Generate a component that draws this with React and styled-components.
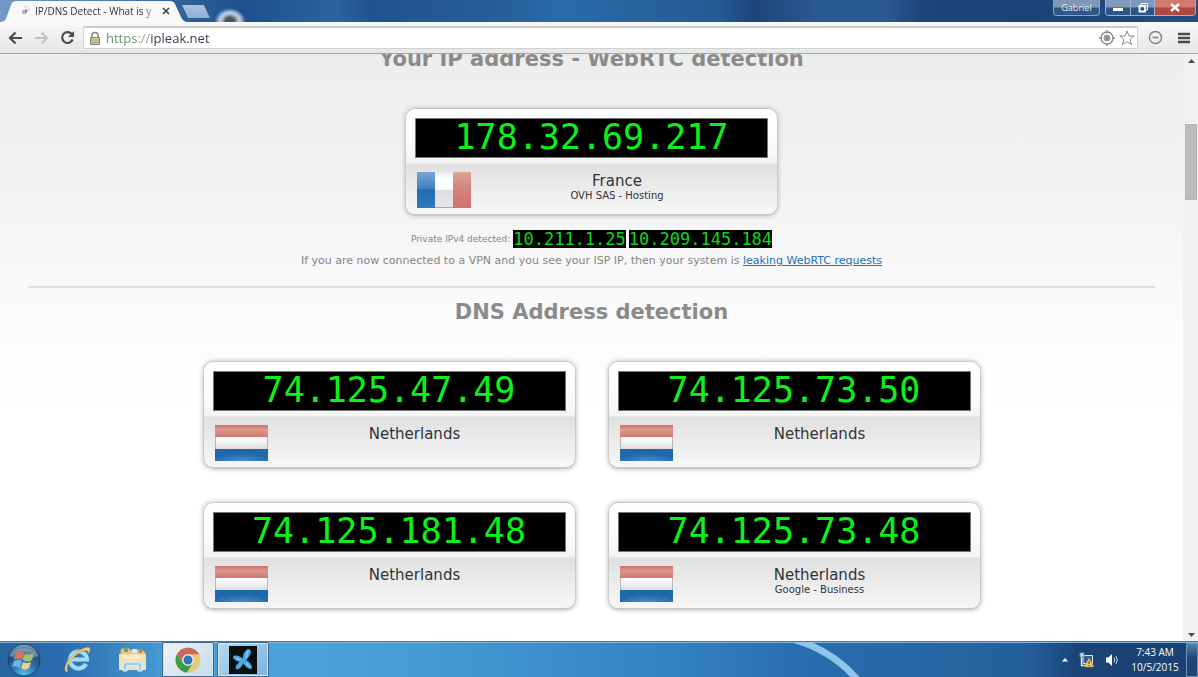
import React from 'react';
import styled, { createGlobalStyle } from 'styled-components';

const Global = createGlobalStyle`
  *, *::before, *::after { box-sizing: border-box; }
  html, body { margin: 0; padding: 0; overflow: hidden; }
  body { font-family: "DejaVu Sans", Verdana, sans-serif; background: #fff; }
  button { font: inherit; border: 0; padding: 0; margin: 0; background: none; color: inherit; }
  svg { display: block; }
`;

const UI_FONT = '"Open Sans", "Noto Sans", sans-serif';

const Screen = styled.div`
  display: flex;
  flex-direction: column;
  height: 100vh;
`;

/* Browser frame */
const TitleBar = styled.header`
  position: relative;
  flex: none;
  display: flex;
  align-items: flex-start;
  height: 22px;
  font-family: ${UI_FONT};
  background:
    radial-gradient(ellipse 12px 10px at 230px 21px, #56534f 0 35%, #a8b6c6 65%, #b4cde8 85%, transparent 130%),
    linear-gradient(90deg, #7399c6 0, #1d508c 240px, #2a639f 28%, #215290 31%, #275f9b 42%, #2b6bab 47%, #255a94 60%, #1c4678 63%, #28598f 68%, #28598f 74%, #1c4678 77%, #1a4477 86%, #204f84 100%);
`;

const Tab = styled.div`
  display: flex;
  align-items: center;
  gap: 5px;
  width: 188px;
  height: 22px;
  padding: 0 18px 0 20px;
  background: #f8f8f8;
  clip-path: path('M0 22 C5 22 6 19 7 16 L11 5 Q12 1 17 1 H169 Q174 1 175 4 L181 17 Q183 22 188 22 Z');
  color: #333;
`;

const TabTitle = styled.span`
  flex: 1;
  font-size: 10px;
  line-height: 20px;
  white-space: nowrap;
  overflow: hidden;
  mask-image: linear-gradient(90deg, #000 108px, transparent 124px);
`;

const NewTab = styled.button`
  width: 28px;
  height: 13px;
  margin: 5px 0 0 -6px;
  background: linear-gradient(#a9c3de, #8fb0d3);
  clip-path: polygon(0 0, 78% 0, 100% 100%, 22% 100%);
`;

const WindowControls = styled.div`
  display: flex;
  gap: 5px;
  margin-left: auto;
  padding-right: 2px;
`;

const ProfileButton = styled.button`
  width: 47px;
  height: 16px;
  border: 1px solid #8ba4c3;
  border-top: 0;
  border-radius: 0 0 4px 4px;
  background: linear-gradient(#7f98b8 45%, #2f5788 55%);
  color: #e9eff6;
  font-size: 9px;
  line-height: 14px;
`;

const ControlGroup = styled.div`
  display: flex;
  height: 16px;
  border: 1px solid #9db2cd;
  border-top: 0;
  border-radius: 0 0 4px 4px;
  overflow: hidden;
`;

const ControlButton = styled.button`
  display: flex;
  align-items: center;
  justify-content: center;
  width: ${(p) => (p.$close ? '41px' : '24px')};
  height: 15px;
  border-left: ${(p) => (p.$first ? '0' : '1px solid #9db2cd')};
  background: ${(p) => (p.$close ? 'linear-gradient(#d07a72 45%, #b04a40 55%)' : 'linear-gradient(#7f9abb 45%, #2c5487 55%)')};
`;

const Toolbar = styled.nav`
  flex: none;
  display: flex;
  align-items: center;
  height: 32px;
  padding: 0 6px 0 7px;
  background: linear-gradient(#f8f8f8, #e6e7e7);
  border-bottom: 1px solid #a5a8a7;
`;

const ToolButton = styled.button`
  display: flex;
  align-items: center;
  justify-content: center;
  width: ${(p) => p.$w || 26}px;
  height: 22px;
`;

const Omnibox = styled.label`
  flex: 1;
  display: flex;
  align-items: center;
  height: 23px;
  margin: 0 7px;
  padding-left: 5px;
  border: 1px solid #d0d1d1;
  border-top: 2px solid #c9caca;
  border-radius: 2px;
  background: #fff;
`;

const Url = styled.input`
  flex: 1;
  min-width: 0;
  height: 20px;
  border: 0;
  padding: 0;
  margin-left: 5px;
  outline: 0;
  font: 13px/20px ${UI_FONT};
  color: transparent;
  background: linear-gradient(90deg, #5f8f62 0 31px, #9a9a9a 31px 44px, #333947 44px);
  background-clip: text;
  -webkit-background-clip: text;
`;

/* Page */
const Viewport = styled.div`
  flex: 1;
  min-height: 0;
  display: flex;
`;

const Page = styled.main`
  flex: 1;
  min-width: 0;
  overflow: hidden;
  padding: 0 28px;
  background: linear-gradient(#ededed 0, #f2f2f2 120px, #fcfcfc 280px, #fff 360px);
`;

const Scrolled = styled.div`
  display: flex;
  flex-direction: column;
  align-items: center;
  margin-top: -8px;
`;

const Heading = styled.h2`
  margin: 0 0 36px;
  font-size: 21px;
  line-height: 26px;
  font-weight: bold;
  color: #8a8a8a;
`;

const Card = styled.article`
  width: 373px;
  height: 108px;
  padding: 9px;
  border: 1px solid #cacaca;
  border-bottom-width: 2px;
  border-radius: 10px;
  background: linear-gradient(#fff 0, #fdfdfd 30px, #f3f3f3 54px, #e0e0e0 55px, #ececec 80px, #f6f6f6 100%);
  box-shadow: 0 0 5px #bbb;
`;

const Address = styled.div`
  height: 40px;
  border: 1px solid #777;
  background: #000;
  color: #0cf01c;
  font: 35px/37px "DejaVu Sans Mono", monospace;
  text-align: center;
  white-space: nowrap;
`;

const Info = styled.div`
  display: flex;
  align-items: flex-start;
  padding: 14px 1px 0 2px;
`;

const Place = styled.div`
  flex: 1;
  padding-right: 4px;
  text-align: center;
  color: #30343a;
`;

const Country = styled.div`
  font-size: 15px;
  line-height: 18px;
`;

const Provider = styled.div`
  font-size: 10px;
  line-height: 12px;
`;

const PrivateRow = styled.div`
  display: flex;
  align-items: center;
  gap: 3px;
  margin-top: 14px;
  font-size: 9px;
  line-height: 18px;
  color: #858585;
`;

const SmallAddress = styled.span`
  height: 18px;
  background: #000;
  color: #0cd81a;
  font: 17px/18px "DejaVu Sans Mono", monospace;
`;

const Note = styled.p`
  margin: 6px 0 18px;
  font-size: 11px;
  line-height: 14px;
  color: #858585;

  a { color: #2470b8; }
`;

const Rule = styled.hr`
  width: 100%;
  height: 2px;
  margin: 0 0 11px;
  border: 0;
  background: #dedede;
`;

const CardGrid = styled.section`
  display: grid;
  grid-template-columns: repeat(2, auto);
  gap: 33px 32px;
`;

const ScrollBar = styled.div`
  flex: none;
  display: flex;
  flex-direction: column;
  align-items: center;
  width: 15px;
  padding: 4px 1px 3px 2px;
  background: #f1f1f1;
`;

const ScrollTrack = styled.div`
  flex: 1;
  width: 100%;
  padding-top: 60px;
`;

const ScrollThumb = styled.div`
  height: 76px;
  border: 1px solid #b4b4b4;
  background: #bcbcbc;
`;

/* Taskbar */
const TaskBar = styled.footer`
  position: relative;
  flex: none;
  display: flex;
  align-items: center;
  height: 36px;
  padding-left: 7px;
  border-top: 1px solid #55758f;
  box-shadow: inset 0 1px #83b4dc;
  font-family: ${UI_FONT};
  color: #fff;
  background: linear-gradient(90deg, #2a63a0 0, #296cae 5%, #489cd4 14%, #4ca3da 25%, #4196d0 40%, #3280c0 57%, #286eaf 67%, #2765a3 80%, #255e9c 86%, #1a4376 90%, #1a4274 100%);
`;

const Streak = styled.svg`
  position: absolute;
  left: 65%;
  top: 0;
`;

const TaskItem = styled.button`
  display: flex;
  align-items: center;
  justify-content: center;
  width: ${(p) => p.$w || 52}px;
  height: 35px;
  margin-right: ${(p) => p.$gap || 0}px;
  border: ${(p) => (p.$open ? '1px solid #40698f' : '0')};
  border-radius: 2px;
  background: ${(p) => (p.$active ? 'linear-gradient(135deg, #eef4f8, #c4dbea)' : p.$open ? 'linear-gradient(135deg, #b8d8ef, #79b4df)' : 'none')};
  box-shadow: ${(p) => (p.$open ? 'inset 0 0 0 1px #d5e7f4' : 'none')};
`;

const Tray = styled.div`
  position: relative;
  display: flex;
  align-items: center;
  gap: 8px;
  height: 100%;
  margin-left: auto;
`;

const Clock = styled.time`
  width: 56px;
  font-size: 10px;
  line-height: 15px;
  padding-top: 1px;
  text-align: center;
`;

const ShowDesktop = styled.button`
  width: 12px;
  height: 34px;
  margin-left: -5px;
  border: 1px solid #6d93bb;
  background: linear-gradient(#5480ad, #1d4577 45%);
`;

const FranceFlag = () => (
  <svg width="54" height="37" role="img" aria-label="France">
    <defs>
      <linearGradient id="frBlue" x2="0" y2="1"><stop offset="0" stopColor="#79a6d4" /><stop offset=".45" stopColor="#4283c0" /><stop offset=".5" stopColor="#216bb0" /><stop offset="1" stopColor="#2e7bbf" /></linearGradient>
      <linearGradient id="frWhite" x2="0" y2="1"><stop offset="0" stopColor="#ececec" /><stop offset=".2" stopColor="#fff" /><stop offset=".5" stopColor="#fafafa" /><stop offset=".51" stopColor="#dedede" /><stop offset="1" stopColor="#e6e6e6" /></linearGradient>
      <linearGradient id="frRed" x2="0" y2="1"><stop offset="0" stopColor="#dfa590" /><stop offset=".4" stopColor="#d48680" /><stop offset="1" stopColor="#cf7371" /></linearGradient>
    </defs>
    <path d="M0 0H18V36H0Z" fill="url(#frBlue)" />
    <path d="M18 0H36V36H18Z" fill="url(#frWhite)" />
    <path d="M36 0H54V36H36Z" fill="url(#frRed)" />
    <path d="M18 35.500H36" stroke="#aaa" />
  </svg>
);

const NetherlandsFlag = () => (
  <svg width="54" height="37" role="img" aria-label="Netherlands">
    <defs>
      <linearGradient id="nlRed" x2="0" y2="1"><stop offset="0" stopColor="#cf6f6c" /><stop offset=".4" stopColor="#dc9a8d" /><stop offset="1" stopColor="#cf7573" /></linearGradient>
      <linearGradient id="nlWhite" x2="0" y2="1"><stop offset="0" stopColor="#fff" /><stop offset=".5" stopColor="#f2f2f2" /><stop offset="1" stopColor="#dcdcdc" /></linearGradient>
      <radialGradient id="nlBlue" cx=".5" cy="1" r=".6"><stop offset="0" stopColor="#4c8dc8" /><stop offset="1" stopColor="#1f68ad" /></radialGradient>
    </defs>
    <path d="M0 0H53V12H0Z" fill="url(#nlRed)" />
    <path d="M0 12H53V24H0Z" fill="url(#nlWhite)" />
    <path d="M0 24H53V36H0Z" fill="url(#nlBlue)" />
    <path d="M.5 12V24M52.500 12V24" stroke="#b9b9b9" />
  </svg>
);

const IpCard = ({ ip, country, provider }) => (
  <Card>
    <Address>{ip}</Address>
    <Info>
      {country === 'France' ? <FranceFlag /> : <NetherlandsFlag />}
      <Place>
        <Country>{country}</Country>
        {provider && <Provider>{provider}</Provider>}
      </Place>
    </Info>
  </Card>
);

const dnsServers = [
  { ip: '74.125.47.49', country: 'Netherlands' },
  { ip: '74.125.73.50', country: 'Netherlands' },
  { ip: '74.125.181.48', country: 'Netherlands' },
  { ip: '74.125.73.48', country: 'Netherlands', provider: 'Google - Business' },
];

const StartOrb = () => (
  <svg width="34" height="34" viewBox="0 0 34 34">
    <defs>
      <radialGradient id="orb" cx=".5" cy=".95" r=".95"><stop offset="0" stopColor="#57c1ee" /><stop offset=".4" stopColor="#2d76ae" /><stop offset=".7" stopColor="#234c78" /><stop offset="1" stopColor="#8fa8c0" /></radialGradient>
    </defs>
    <circle cx="17" cy="17" r="16" fill="url(#orb)" stroke="#1d426c" />
    <path d="M3 13C6 3 28 3 31 13Q17 20 3 13Z" fill="#fff" opacity=".28" />
    <path d="M9 10Q13 7 17 10L15 17Q11 14 7 17Z" fill="#d9735b" />
    <path d="M18 11Q22 13 27 10L25 17Q20 20 16 17Z" fill="#9cc078" />
    <path d="M7 18Q11 15 15 18L13 25Q9 22 5 24Z" fill="#68b4e5" />
    <path d="M16 19Q20 21 24 19L22 25Q18 28 14 25Z" fill="#f0d08a" />
  </svg>
);

const InternetExplorer = () => (
  <svg width="30" height="30" viewBox="0 0 30 30" fill="none">
    <path d="M23 19A8.500 8.500 0 1 1 24 14.500H9" stroke="#2d82bd" strokeWidth="6" />
    <path d="M23 19A8.500 8.500 0 1 1 24 14.500H9" stroke="#a5daf6" strokeWidth="4" />
    <path d="M3 27C-1 22 7 10 17 5C22 2 27 1 27 4C27 6 26 8 25 9C26 4 21 5 16 8C8 13 2 22 5 26Z" fill="#efd089" stroke="#b38a42" strokeWidth=".6" />
  </svg>
);

const Explorer = () => (
  <svg width="30" height="28" viewBox="0 0 30 28">
    <path d="M3 3L10 2L12 4H24L27 6V23H2Z" fill="#e8c98b" stroke="#c29d5a" />
    <path d="M6 2H10V6H6Z" fill="#69a966" /><path d="M14 3H19V7H14Z" fill="#dbe8ee" /><path d="M21 4H24V7H21Z" fill="#d37562" />
    <path d="M1 8H28V24H1Z" fill="#f4dfb0" />
    <path d="M5 12H24M4 10H26" stroke="#fff3d4" />
    <path d="M5 25V19Q5 16 8 16H21Q24 16 24 19V25H20V20H9V25Z" fill="#9bd2ef" stroke="#e7f7ff" />
  </svg>
);

const Chrome = () => (
  <svg width="26" height="26" viewBox="0 0 26 26">
    <circle cx="13" cy="13" r="12.500" fill="#e9c77e" />
    <path d="M2.200 6.800A12.500 12.500 0 0 1 24 7.300H13A5.800 5.800 0 0 0 7.500 15Z" fill="#d0655f" />
    <path d="M2.200 6.800A12.500 12.500 0 0 0 12 25.500L18 16A5.800 5.800 0 0 1 8 16Z" fill="#3b9b48" />
    <circle cx="13" cy="13" r="5.800" fill="#e8edf0" />
    <circle cx="13" cy="13" r="4.500" fill="#2f77b8" />
  </svg>
);

const Telenor = () => (
  <svg width="28" height="28" viewBox="0 0 28 28">
    <path d="M0 0H28V28H0Z" fill="#07100e" />
    <g fill="#4aa7df">
      <path d="M14 15C13 9 16 3 20 3C24 4 21 11 16 15Z" />
      <path d="M16 16C10 17 4 14 4 11C5 8 12 10 16 14Z" />
      <path d="M14 13C19 14 23 18 23 22C21 25 15 20 13 15Z" />
      <path d="M15 15C14 20 9 25 7 23C5 20 10 16 13 14Z" />
    </g>
    <path d="M17 12L19 5M7 12L12 14M17 17L21 21" stroke="#9bd5f4" />
  </svg>
);

export default function App() {
  return (
    <Screen>
      <Global />
      <TitleBar>
        <Tab>
          <svg width="10" height="12" viewBox="0 0 10 12" fill="none" stroke="#888">
            <path d="M3 5V9M5 9V5H7V7H5" stroke="#555" strokeWidth=".8" />
            <path d="M4 2Q9 1 9 6" stroke="#aaa" strokeDasharray="1 1" />
          </svg>
          <TabTitle>IP/DNS Detect - What is y</TabTitle>
          <button aria-label="Close tab">
            <svg width="8" height="8" viewBox="0 0 8 8"><path d="M1 1L7 7M7 1L1 7" stroke="#444" strokeWidth="1.600" /></svg>
          </button>
        </Tab>
        <NewTab aria-label="New tab" />
        <WindowControls>
          <ProfileButton>Gabriel</ProfileButton>
          <ControlGroup>
            <ControlButton $first aria-label="Minimize">
              <svg width="10" height="9" viewBox="0 0 10 9"><path d="M0 5H10V8H0Z" fill="#fff" /></svg>
            </ControlButton>
            <ControlButton aria-label="Restore">
              <svg width="10" height="10" viewBox="0 0 10 10" fill="none" stroke="#fff"><path d="M3 2.500V.5H9.500V7H8" /><path d="M1.500 3H7V8.500H1.500Z" strokeWidth="1.800" /></svg>
            </ControlButton>
            <ControlButton $close aria-label="Close">
              <svg width="10" height="9" viewBox="0 0 10 9"><path d="M1 1L9 8M9 1L1 8" stroke="#fff" strokeWidth="2.400" /></svg>
            </ControlButton>
          </ControlGroup>
        </WindowControls>
      </TitleBar>
      <Toolbar>
        <ToolButton $w={17} aria-label="Back">
          <svg width="15" height="14" viewBox="0 0 15 14" fill="none" stroke="#4b4b4b" strokeWidth="2.200"><path d="M14 7H3M7.500 1.500L2 7L7.500 12.500" /></svg>
        </ToolButton>
        <ToolButton $w={34} aria-label="Forward">
          <svg width="15" height="14" viewBox="0 0 15 14" fill="none" stroke="#c2c2c2" strokeWidth="2.200"><path d="M1 7H12M7.500 1.500L13 7L7.500 12.500" /></svg>
        </ToolButton>
        <ToolButton $w={18} aria-label="Reload">
          <svg width="15" height="15" viewBox="0 0 15 15"><path d="M12 4.500A5.400 5.400 0 1 0 12.600 9.500" fill="none" stroke="#4b4b4b" strokeWidth="2.200" /><path d="M14 1V7H8Z" fill="#4b4b4b" /></svg>
        </ToolButton>
        <Omnibox>
          <svg width="12" height="15" viewBox="0 0 12 15"><path d="M3 7V4Q3 1.500 6 1.500T9 4V7" fill="none" stroke="#8d8d8d" strokeWidth="1.600" /><path d="M1.500 6.500H10.500V13.500H1.500Z" fill="#cfcda0" stroke="#85836d" /><path d="M2 9H10M2 11.500H10" stroke="#a4a283" /></svg>
          <Url aria-label="Address" defaultValue="https://ipleak.net" />
          <ToolButton $w={20} as="span">
            <svg width="16" height="16" viewBox="0 0 16 16" fill="none" stroke="#8b8b8b"><circle cx="8" cy="8" r="6" strokeWidth="1.300" /><circle cx="8" cy="8" r="3" /><circle cx="8" cy="8" r="2.300" fill="#8b8b8b" stroke="none" /><path d="M8 0V3M8 13V16M0 8H3M13 8H16" strokeWidth="1.400" /></svg>
          </ToolButton>
          <ToolButton $w={20} as="span">
            <svg width="16" height="16" viewBox="0 0 16 16"><path d="M8 1L10 6H15.200L11.100 9.300L12.600 14.700L8 11.600L3.400 14.700L4.900 9.300L.8 6H6Z" fill="#fff" stroke="#8a8a8a" strokeLinejoin="round" /></svg>
          </ToolButton>
        </Omnibox>
        <ToolButton $w={20} aria-label="Extension">
          <svg width="15" height="15" viewBox="0 0 15 15" fill="none" stroke="#828282"><circle cx="7.500" cy="7.500" r="6" strokeWidth="1.400" /><path d="M4.500 7.500H10.500" strokeWidth="1.600" /></svg>
        </ToolButton>
        <ToolButton $w={27} aria-label="Menu">
          <svg width="27" height="12" viewBox="0 0 27 12" stroke="#4b4b4b" strokeWidth="2.400"><path d="M13 2H25M13 6H25M13 10H25" /></svg>
        </ToolButton>
      </Toolbar>

      <Viewport>
        <Page>
          <Scrolled>
            <Heading>Your IP address - WebRTC detection</Heading>
            <IpCard ip="178.32.69.217" country="France" provider="OVH SAS - Hosting" />
            <PrivateRow>
              <span>Private IPv4 detected:</span>
              <SmallAddress>10.211.1.25</SmallAddress>
              <SmallAddress>10.209.145.184</SmallAddress>
            </PrivateRow>
            <Note>
              If you are now connected to a VPN and you see your ISP IP, then your system is <a href="#webrtc">leaking WebRTC requests</a>
            </Note>
            <Rule />
            <Heading>DNS Address detection</Heading>
            <CardGrid>
              {dnsServers.map((server) => <IpCard key={server.ip} {...server} />)}
            </CardGrid>
          </Scrolled>
        </Page>
        <ScrollBar>
          <svg width="7" height="6" viewBox="0 0 7 6"><path d="M0 5L3.500 1L7 5Z" fill="#4d4d4d" /></svg>
          <ScrollTrack><ScrollThumb /></ScrollTrack>
          <svg width="7" height="6" viewBox="0 0 7 6"><path d="M0 1L3.500 5L7 1Z" fill="#4d4d4d" /></svg>
        </ScrollBar>
      </Viewport>

      <TaskBar>
        <Streak width="100" height="35" viewBox="0 0 100 35" fill="none">
          <path d="M16 -2Q52 8 78 37" stroke="#8fc5ec" strokeWidth="7" />
        </Streak>
        <TaskItem $w={34} $gap={11} aria-label="Start"><StartOrb /></TaskItem>
        <TaskItem aria-label="Internet Explorer"><InternetExplorer /></TaskItem>
        <TaskItem $w={58} aria-label="File Explorer"><Explorer /></TaskItem>
        <TaskItem $open $active $gap={3} aria-label="Google Chrome"><Chrome /></TaskItem>
        <TaskItem $open aria-label="Telenor"><Telenor /></TaskItem>
        <Tray>
          <svg width="8" height="5" viewBox="0 0 8 5"><path d="M1 4.500L4 1L7 4.500Z" fill="#fff" /></svg>
          <svg width="20" height="16" viewBox="0 0 20 16">
            <path d="M6 3.500H15.500V11.500H6Z" fill="#345f8c" stroke="#dfe8ef" />
            <path d="M4.500 5V13.500H10" fill="none" stroke="#e4ebf1" strokeWidth="1.500" />
            <path d="M3 1H7V5H3Z" fill="#d9dbe8" stroke="#7e89a3" />
            <path d="M12 6L17 15H7Z" fill="#f1cb6c" stroke="#ad843a" strokeWidth=".6" /><path d="M12 9V12M12 13V14" stroke="#333" />
          </svg>
          <svg width="14" height="14" viewBox="0 0 14 14"><path d="M1 4.500H3.500L7 1V13L3.500 9.500H1Z" fill="#fff" /><path d="M9 4.500Q10.500 7 9 9.500M11 3Q13.500 7 11 11" fill="none" stroke="#c6d8ea" /></svg>
          <Clock>7:43 AM<br />10/5/2015</Clock>
          <ShowDesktop aria-label="Show desktop" />
        </Tray>
      </TaskBar>
    </Screen>
  );
}
